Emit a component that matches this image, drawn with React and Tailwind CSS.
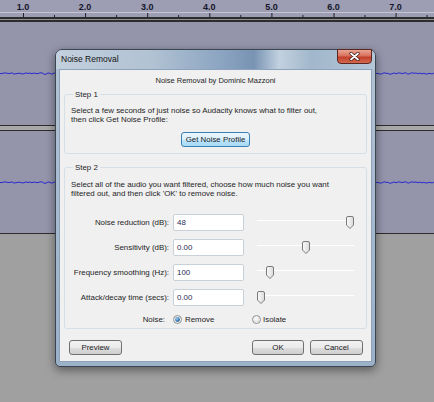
import React from 'react';

const rulerMarks = ['1.0', '2.0', '3.0', '4.0', '5.0', '6.0', '7.0'];

const rows = [
  { label: 'Noise reduction (dB):', value: '48', thumb: 89 },
  { label: 'Sensitivity (dB):', value: '0.00', thumb: 45 },
  { label: 'Frequency smoothing (Hz):', value: '100', thumb: 9 },
  { label: 'Attack/decay time (secs):', value: '0.00', thumb: 0 },
];

// little jittery noise line for the waveform
function Wave() {
  let pts = [];
  let seed = 7;
  for (let x = 0; x <= 434; x += 2) {
    seed = (seed * 9301 + 49297) % 233280;
    const y = 2.5 + ((seed / 233280) - 0.5) * 1.6;
    pts.push(`${x},${y.toFixed(2)}`);
  }
  return (
    <svg width="434" height="5" className="block">
      <polyline points={pts.join(' ')} fill="none" stroke="#2a2ad0" strokeWidth="1" />
    </svg>
  );
}

function Ruler() {
  return (
    <div className="relative h-[17px] bg-[#9d9db3]">
      {rulerMarks.map((m, i) => (
        <span
          key={m}
          className="absolute top-[2px] w-[20px] -translate-x-1/2 text-center text-[9px] leading-[10px] font-semibold text-[#15152a]"
          style={{ left: 23 + i * 62.1 }}
        >
          {m}
        </span>
      ))}
      <svg width="434" height="17" className="absolute left-0 top-0">
        <line x1="0" y1="12.5" x2="434" y2="12.5" stroke="#c6c6d2" strokeWidth="1" />
        {rulerMarks.map((m, i) => (
          <line key={m} x1={23.5 + i * 62.1} y1="13" x2={23.5 + i * 62.1} y2="17" stroke="#202030" strokeWidth="1" />
        ))}
        {[0, 1, 2, 3, 4, 5, 6, 7].map((i) => (
          <line key={i} x1={54.5 + i * 62.1} y1="15" x2={54.5 + i * 62.1} y2="17" stroke="#202030" strokeWidth="1" />
        ))}
      </svg>
    </div>
  );
}

function Thumb() {
  return (
    <svg width="8" height="13" viewBox="0 0 8 13">
      <defs>
        <linearGradient id="tg" x1="0" y1="0" x2="1" y2="0">
          <stop offset="0" stopColor="#fbfbfb" />
          <stop offset="1" stopColor="#dadada" />
        </linearGradient>
      </defs>
      <path
        d="M0.5 2 Q0.5 0.5 2 0.5 H6 Q7.5 0.5 7.5 2 V9 L4 12.5 L0.5 9 Z"
        fill="url(#tg)"
        stroke="#7a7a7a"
        strokeWidth="1"
      />
    </svg>
  );
}

function Radio({ checked }) {
  return (
    <svg width="9" height="9" viewBox="0 0 9 9" className="shrink-0">
      <defs>
        <radialGradient id={checked ? 'rgOn' : 'rgOff'} cx="0.4" cy="0.35" r="0.7">
          <stop offset="0" stopColor={checked ? '#9fd3f6' : '#ffffff'} />
          <stop offset="1" stopColor={checked ? '#0d4c8a' : '#d9d9d9'} />
        </radialGradient>
      </defs>
      <circle cx="4.5" cy="4.5" r="4" fill="#f2f2f2" stroke="#8e8f8f" strokeWidth="1" />
      <circle cx="4.5" cy="4.5" r={checked ? 2.4 : 2.8} fill={`url(#${checked ? 'rgOn' : 'rgOff'})`} />
    </svg>
  );
}

function WinButton({ children, className = '', focused = false }) {
  return (
    <button
      className={`flex h-[15px] items-center justify-center rounded-[3px] border text-[7.9px] leading-none text-[#1b1b1b] ${
        focused
          ? 'border-[#3c7fb1] bg-[linear-gradient(180deg,#eaf6fd_0%,#d9f0fc_50%,#bee6fd_51%,#a7d9f5_100%)]'
          : 'border-[#707070] bg-[linear-gradient(180deg,#f2f2f2_0%,#ebebeb_50%,#dddddd_51%,#cfcfcf_100%)]'
      } ${className}`}
    >
      {children}
    </button>
  );
}

export default function App() {
  return (
    <div className="relative h-[402px] w-[434px] overflow-hidden bg-[#a0a0a0] font-['Liberation_Sans',Arial,sans-serif]">
      {/* background: audacity tracks */}
      <Ruler />
      <div className="h-[2px] bg-[#2c2c2c]" />
      <div className="h-px bg-[#8e8e8e]" />
      <div className="h-[2px] bg-[#2c2c2c]" />
      <div className="flex h-[103px] flex-col justify-center bg-[#9494ab] pb-[1px]">
        <Wave />
      </div>
      <div className="h-px bg-[#2c2c2c]" />
      <div className="h-[4px] bg-[#a9a9a9]" />
      <div className="h-px bg-[#2c2c2c]" />
      <div className="flex h-[102px] flex-col justify-center bg-[#9494ab] pt-[1px]">
        <Wave />
      </div>
      <div className="h-px bg-[#2c2c2c]" />

      {/* Noise Removal dialog */}
      <div className="absolute left-[55px] top-[49px] flex h-[318px] w-[321px] flex-col rounded-t-[7px] rounded-b-[5px] border border-[#3b4653] bg-[linear-gradient(180deg,#b3c3d4_0%,#9bb1c8_100%)] shadow-[0_3px_10px_rgba(0,0,0,0.45)]">
        <div className="relative flex h-[19px] shrink-0 items-center rounded-t-[6px] bg-[linear-gradient(90deg,#c3d0de_0%,#b1c2d3_30%,#8ba4c1_52%,#7893b3_62%,#c2d1df_70%,#a2b7cc_80%,#b5c6d7_100%)] pl-[5px]">
          <span className="text-[8.5px] text-[#141414]">Noise Removal</span>
          <div className="absolute right-[3px] top-[-1px] flex h-[15px] w-[35px] items-center justify-center rounded-b-[4px] border border-[#5a2620] bg-[linear-gradient(180deg,#eaa595_0%,#d8705c_45%,#c2402a_55%,#d3694f_100%)]">
            <svg width="11" height="9" viewBox="0 0 11 9">
              <path d="M2 1.5 L9 7.5 M9 1.5 L2 7.5" stroke="#3a1510" strokeWidth="3.2" strokeLinecap="round" />
              <path d="M2 1.5 L9 7.5 M9 1.5 L2 7.5" stroke="#ffffff" strokeWidth="1.8" strokeLinecap="round" />
            </svg>
          </div>
        </div>

        <div className="mx-[3px] mb-[4px] flex flex-1 flex-col border border-[#8ea3bb] bg-[#f0f0f0] px-[4px] text-[7.9px] leading-[9px] text-[#1e1e1e]">
          <p className="pt-[6px] text-center text-[7.5px]">Noise Removal by Dominic Mazzoni</p>

          <fieldset className="mt-[5px] rounded-[3px] border border-[#d5dfe5] px-[6px] pb-[6px] pt-[7px]">
            <legend className="ml-[2px] px-[2px]">Step 1</legend>
            <p>
              Select a few seconds of just noise so Audacity knows what to filter out,
              <br />
              then click Get Noise Profile:
            </p>
            <div className="mt-[8px] flex justify-center">
              <WinButton focused className="h-[14px] w-[69px]">
                Get Noise Profile
              </WinButton>
            </div>
          </fieldset>

          <fieldset className="mt-[9px] rounded-[3px] border border-[#d5dfe5] px-[6px] pb-[4px] pt-[8px]">
            <legend className="ml-[2px] px-[2px]">Step 2</legend>
            <p>
              Select all of the audio you want filtered, choose how much noise you want
              <br />
              filtered out, and then click 'OK' to remove noise.
            </p>
            <div className="mt-[16px] flex flex-col gap-[8px]">
              {rows.map((r) => (
                <div key={r.label} className="flex h-[17px] items-center">
                  <span className="w-[98px] whitespace-nowrap text-right">{r.label}</span>
                  <div className="ml-[4px] flex h-[17px] w-[71px] items-center rounded-[2px] border border-[#c9d1d8] bg-white pl-[3px] text-[#2b2b55]">
                    {r.value}
                  </div>
                  <div className="relative ml-[13px] h-[17px] w-[97px] pt-[6px]">
                    <div className="h-px border-b border-white bg-[#a5a5a5]" />
                    <div className="absolute top-[2px]" style={{ left: r.thumb }}>
                      <Thumb />
                    </div>
                  </div>
                </div>
              ))}
              <div className="flex h-[10px] items-center">
                <span className="w-[98px] pr-[4px] text-right">Noise:</span>
                <div className="ml-[4px] flex w-[79px] items-center gap-[3px]">
                  <Radio checked />
                  <span>Remove</span>
                </div>
                <div className="flex items-center gap-[2px]">
                  <Radio />
                  <span>Isolate</span>
                </div>
              </div>
            </div>
          </fieldset>

          <div className="mt-[11px] flex items-center pl-[5px] pr-[4px]">
            <WinButton className="w-[53px]">Preview</WinButton>
            <div className="ml-auto flex gap-[6px]">
              <WinButton className="w-[52px]">OK</WinButton>
              <WinButton className="w-[53px]">Cancel</WinButton>
            </div>
          </div>
        </div>
      </div>
    </div>
  );
}
